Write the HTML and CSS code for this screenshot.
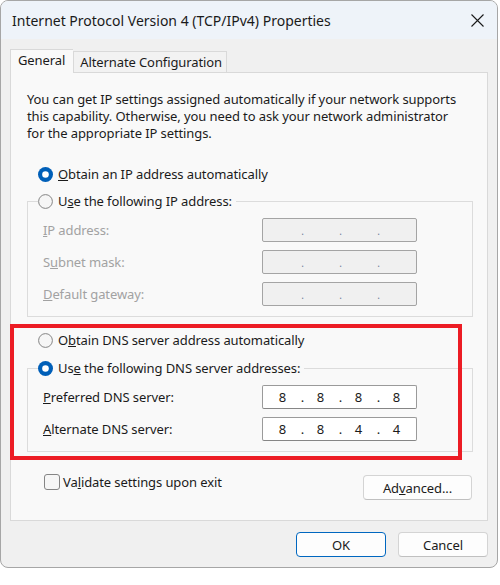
FILE: index.html
```html
<!DOCTYPE html>
<html lang="en">
<head>
<meta charset="utf-8">
<title>Internet Protocol Version 4 (TCP/IPv4) Properties</title>
<link rel="stylesheet" href="styles.css">
</head>
<body>
<div class="window">
  <div class="titlebar">
    <span class="title">Internet Protocol Version 4 (TCP/IPv4) Properties</span>
    <svg class="close" width="13" height="13" viewBox="0 0 13 13"><path d="M0.5 0.5 L12.5 12.5 M12.5 0.5 L0.5 12.5" stroke="#1a1a1a" stroke-width="1.1" fill="none"/></svg>
  </div>
  <div class="client">
    <div class="tabs">
      <div class="tab active">General</div>
      <div class="tab">Alternate Configuration</div>
    </div>
    <div class="panel">
      <p class="desc">You can get IP settings assigned automatically if your network supports<br>this capability. Otherwise, you need to ask your network administrator<br>for the appropriate IP settings.</p>

      <div class="radio-row first">
        <svg class="radio" width="15" height="15" viewBox="0 0 15 15"><circle cx="7.5" cy="7.5" r="7.5" fill="#005fb8"/><circle cx="7.5" cy="7.5" r="3.3" fill="#fff"/></svg>
        <span><u>O</u>btain an IP address automatically</span>
      </div>

      <div class="group ip-group">
        <div class="legend">
          <svg class="radio" width="15" height="15" viewBox="0 0 15 15"><circle cx="7.5" cy="7.5" r="6.9" fill="#f6f6f6" stroke="#858585" stroke-width="1"/></svg>
          <span>U<u>s</u>e the following IP address:</span>
        </div>
        <div class="rows">
          <div class="field disabled"><span class="lbl"><u>I</u>P address:</span><div class="ip off"><span></span><i>.</i><span></span><i>.</i><span></span><i>.</i><span></span></div></div>
          <div class="field disabled"><span class="lbl">S<u>u</u>bnet mask:</span><div class="ip off"><span></span><i>.</i><span></span><i>.</i><span></span><i>.</i><span></span></div></div>
          <div class="field disabled"><span class="lbl"><u>D</u>efault gateway:</span><div class="ip off"><span></span><i>.</i><span></span><i>.</i><span></span><i>.</i><span></span></div></div>
        </div>
      </div>

      <div class="radio-row dns-first">
        <svg class="radio" width="15" height="15" viewBox="0 0 15 15"><circle cx="7.5" cy="7.5" r="6.9" fill="#f6f6f6" stroke="#858585" stroke-width="1"/></svg>
        <span>O<u>b</u>tain DNS server address automatically</span>
      </div>

      <div class="group dns-group">
        <div class="legend">
          <svg class="radio" width="15" height="15" viewBox="0 0 15 15"><circle cx="7.5" cy="7.5" r="7.5" fill="#005fb8"/><circle cx="7.5" cy="7.5" r="3.3" fill="#fff"/></svg>
          <span>Us<u>e</u> the following DNS server addresses:</span>
        </div>
        <div class="rows">
          <div class="field"><span class="lbl"><u>P</u>referred DNS server:</span><div class="ip on"><span>8</span><i>.</i><span>8</span><i>.</i><span>8</span><i>.</i><span>8</span></div></div>
          <div class="field"><span class="lbl"><u>A</u>lternate DNS server:</span><div class="ip on"><span>8</span><i>.</i><span>8</span><i>.</i><span>4</span><i>.</i><span>4</span></div></div>
        </div>
      </div>

      <div class="bottom-row">
        <div class="check-row">
          <span class="checkbox"></span>
          <span>Va<u>l</u>idate settings upon exit</span>
        </div>
        <button class="btn adv">Ad<u>v</u>anced...</button>
      </div>
    </div>
    <div class="dialog-buttons">
      <button class="btn ok">OK</button>
      <button class="btn">Cancel</button>
    </div>
  </div>
</div>
<div class="highlight"></div>
</body>
</html>
```

FILE: styles.css
```css
* { box-sizing: border-box; }

html, body {
  margin: 0;
  padding: 0;
  background: #ffffff;
}

body {
  position: relative;
  width: 500px;
  height: 585px;
  font-family: "Segoe UI", "Noto Sans", "Open Sans", sans-serif;
  font-size: 13px;
  letter-spacing: -0.1px;
  color: #1b1b1b;
}

.window {
  width: 498px;
  height: 568px;
  border: 1px solid #a6a6a6;
  border-radius: 8px;
  overflow: hidden;
  background: #f0f0f0;
  display: flex;
  flex-direction: column;
}

.titlebar {
  height: 38px;
  background: #eef3f9;
  display: flex;
  align-items: center;
  justify-content: space-between;
  padding: 0 13px 0 11px;
  flex: none;
}

.title {
  font-size: 14px;
  letter-spacing: 0;
  color: #1a1a1a;
}

.close { display: block; }

.client {
  flex: 1;
  padding: 10px 9px 0 9px;
  display: flex;
  flex-direction: column;
}

.tabs {
  display: flex;
  align-items: flex-end;
  height: 23px;
  position: relative;
  z-index: 1;
}

.tab {
  height: 21px;
  padding: 0 4px 0 6px;
  border: 1px solid #d9d9d9;
  border-bottom: none;
  background: #f2f2f2;
  line-height: 20px;
}

.tab.active {
  height: 24px;
  margin-bottom: -1px;
  background: #f9f9f9;
  padding: 0 8px 0 7px;
  line-height: 21px;
  border-right: none;
}

.panel {
  height: 449px;
  border: 1px solid #d9d9d9;
  background: #f9f9f9;
  padding: 18px 14px 0 16px;
}

.desc {
  margin: 0;
  line-height: 17px;
}

.radio-row {
  display: flex;
  align-items: center;
  height: 18px;
  margin-left: 11px;
  gap: 5px;
}

.radio-row.first { margin-top: 23px; }
.radio-row.dns-first { margin-top: 14px; }

.radio { display: block; flex: none; }

.group {
  border: 1px solid #dcdcdc;
  padding: 0 0 10px 0;
}

.ip-group { margin-top: 18px; }
.dns-group { margin-top: 19px; }

.legend {
  display: flex;
  width: max-content;
  align-items: center;
  gap: 5px;
  height: 18px;
  margin: -10px 0 0 10px;
  padding-right: 4px;
  background: #f9f9f9;
}

.rows {
  display: flex;
  flex-direction: column;
  gap: 8px;
  margin-top: 8px;
  padding-left: 15px;
}

.field {
  display: flex;
  align-items: center;
  height: 24px;
}

.lbl { width: 219px; flex: none; }

.field.disabled .lbl { color: #a2a2a2; }

.ip {
  width: 155px;
  height: 24px;
  border: 1px solid #9e9e9e;
  border-radius: 2px;
  display: flex;
  align-items: center;
  padding-left: 4px;
  font-size: 13px;
  letter-spacing: 0;
}

.ip.off {
  background: #f0f0f0;
  border-color: #a4a4a4;
  color: #6e7f99;
}

.ip.on {
  background: #ffffff;
  border-color: #9a9a9a;
  border-bottom-color: #868686;
  color: #1b1b1b;
}

.ip span {
  width: 31px;
  text-align: center;
}

.ip i {
  font-style: normal;
  width: 7px;
  text-align: center;
  padding-left: 2px;
}

.ip.off i { font-size: 10px; padding-top: 2px; }

.bottom-row {
  display: flex;
  justify-content: space-between;
  align-items: flex-start;
  margin-top: 21px;
  width: 446px;
  padding-left: 17px;
}

.check-row {
  display: flex;
  align-items: center;
  gap: 3px;
  height: 17px;
}

.checkbox {
  display: block;
  width: 16px;
  height: 16px;
  border: 1px solid #858585;
  border-radius: 3px;
  background: #f6f6f6;
}

.btn {
  font-family: inherit;
  font-size: 13px;
  letter-spacing: -0.1px;
  color: #1b1b1b;
  height: 25px;
  border: 1px solid #d4d4d4;
  border-bottom-color: #c0c0c0;
  border-radius: 4px;
  background: #fdfdfd;
  padding: 0;
}

.adv {
  width: 109px;
  margin-top: 2px;
  margin-right: 1px;
}

.dialog-buttons {
  display: flex;
  justify-content: flex-end;
  gap: 12px;
  margin-top: 11px;
}

.dialog-buttons .btn { width: 90px; }

.btn.ok {
  border: 1.5px solid #0067c0;
}

.highlight {
  position: absolute;
  left: 10px;
  top: 324px;
  width: 452px;
  height: 136px;
  border: 4px solid #ec1c24;
}
```
